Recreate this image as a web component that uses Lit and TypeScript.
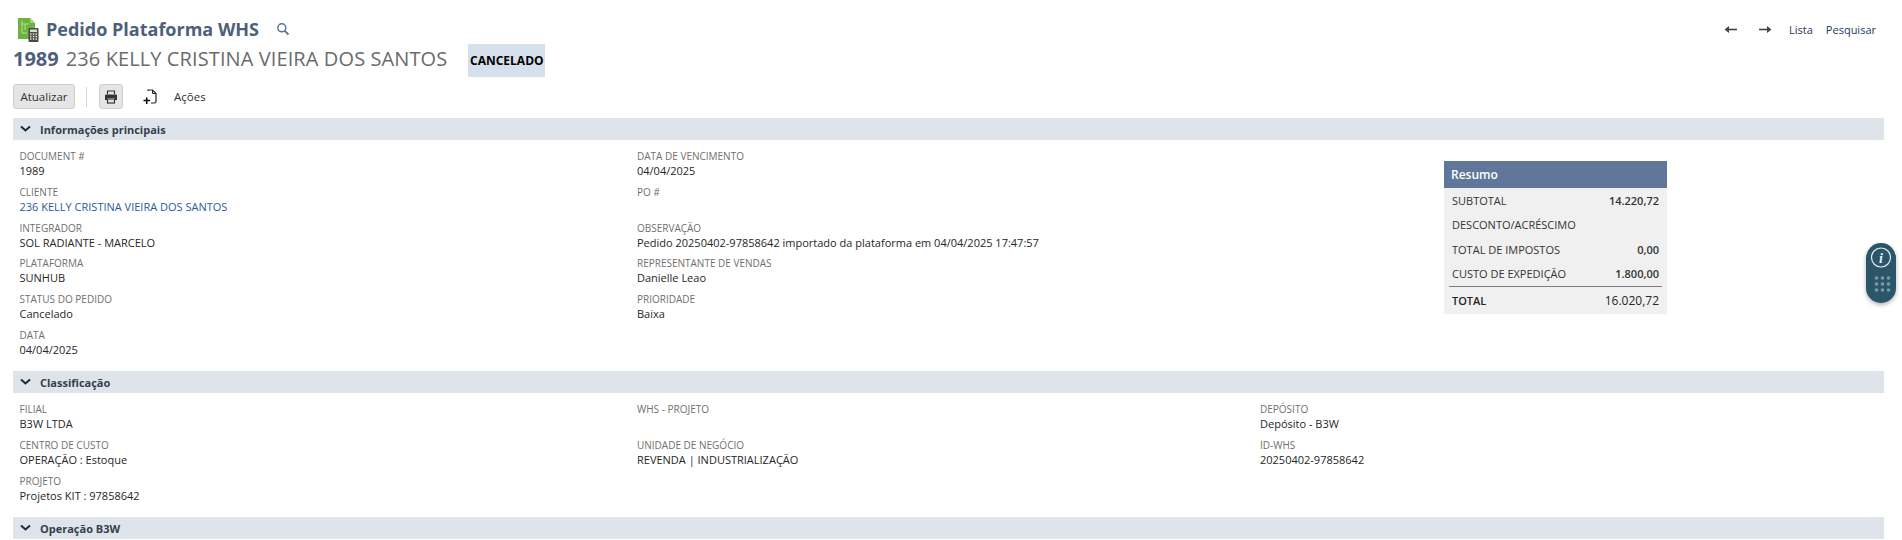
import { LitElement, html, css } from "lit";
import { customElement } from "lit/decorators.js";

type F = { l: string; v: string; link?: boolean };
const col1: F[] = [
  { l: "DOCUMENT #", v: "1989" },
  { l: "CLIENTE", v: "236 KELLY CRISTINA VIEIRA DOS SANTOS", link: true },
  { l: "INTEGRADOR", v: "SOL RADIANTE - MARCELO" },
  { l: "PLATAFORMA", v: "SUNHUB" },
  { l: "STATUS DO PEDIDO", v: "Cancelado" },
  { l: "DATA", v: "04/04/2025" },
];
const col2: F[] = [
  { l: "DATA DE VENCIMENTO", v: "04/04/2025" },
  { l: "PO #", v: "" },
  { l: "OBSERVAÇÃO", v: "Pedido 20250402-97858642 importado da plataforma em 04/04/2025 17:47:57" },
  { l: "REPRESENTANTE DE VENDAS", v: "Danielle Leao" },
  { l: "PRIORIDADE", v: "Baixa" },
];
const c1: F[] = [
  { l: "FILIAL", v: "B3W LTDA" },
  { l: "CENTRO DE CUSTO", v: "OPERAÇÃO : Estoque" },
  { l: "PROJETO", v: "Projetos KIT : 97858642" },
];
const c2: F[] = [
  { l: "WHS - PROJETO", v: "" },
  { l: "UNIDADE DE NEGÓCIO", v: "REVENDA | INDUSTRIALIZAÇÃO" },
];
const c3: F[] = [
  { l: "DEPÓSITO", v: "Depósito - B3W" },
  { l: "ID-WHS", v: "20250402-97858642" },
];
const sum = [
  ["SUBTOTAL", "14.220,72"],
  ["DESCONTO/ACRÉSCIMO", ""],
  ["TOTAL DE IMPOSTOS", "0,00"],
  ["CUSTO DE EXPEDIÇÃO", "1.800,00"],
];

const chevron = html`<svg class="chev" width="11" height="8" viewBox="0 0 11 8"><path d="M1 1.500 5.500 5.500 10 1.500" fill="none" stroke="#1f2a37" stroke-width="2"/></svg>`;

@customElement("app-root")
export class AppRoot extends LitElement {
  static styles = css`
    :host { display: block; position: relative; height: 540px; overflow: hidden; background: #fff; font-family: "Open Sans", sans-serif; color: #262626; font-size: 11px; }
    .page { padding: 0 18px 0 13px; }
    .top { display: flex; align-items: center; height: 44px; padding-top: 14px; box-sizing: border-box; padding-left: 4px; }
    .top h1 { margin: 0 0 0 5px; font-size: 18px; font-weight: 700; color: #4d5f79; line-height: 26px; }
    .search { margin-left: 17px; }
    .nav { margin-left: auto; display: flex; align-items: center; font-size: 11px; color: #1f3a5c; padding-right: 8px; }
    .nav .a2 { margin-left: 20px; }
    .nav .lista { margin-left: 17px; }
    .nav .pesq { margin-left: 13px; }
    .rec { display: flex; align-items: flex-start; height: 33px; margin-top: 0; }
    .num { font-size: 20px; font-weight: 700; color: #4d5f79; line-height: 29px; }
    .name { font-size: 20px; color: #6b6b6b; margin-left: 7px; line-height: 29px; letter-spacing: 0.1px; }
    .status { margin-left: 21px; height: 33px; width: 77px; background: #d5e0ec; color: #000; font-weight: 700; font-size: 12px; display: flex; align-items: center; justify-content: center; }
    .tools { display: flex; align-items: center; height: 25px; margin-top: 7px; }
    .btn { height: 25px; box-sizing: border-box; border: 1px solid #cfcfcf; border-radius: 3px; background: #e5e5e5; display: flex; align-items: center; justify-content: center; color: #333; font-size: 11.500px; }
    .b1 { width: 62px; }
    .sep { width: 1px; height: 20px; background: #d4d4d4; margin: 0 12px 0 11px; }
    .b2 { width: 24px; }
    .add { margin-left: 20px; }
    .acoes { margin-left: 17px; font-size: 11.500px; color: #333; }
    .bar { height: 22px; background: #dfe4eb; display: flex; align-items: center; font-weight: 700; font-size: 11px; color: #333f4d; }
    .chev { margin: 0 9px 0 7px; }
    .b-main { margin-top: 9px; }
    .s1 { display: grid; grid-template-columns: 617.500px 623px 1fr; padding: 9px 0 0 6.500px; height: 231px; box-sizing: border-box; }
    .s2 { display: grid; grid-template-columns: 617.500px 623px 1fr; padding: 9px 0 0 6.500px; height: 124px; box-sizing: border-box; }
    .f { height: 35.800px; box-sizing: border-box; }
    .l { font-size: 10px; line-height: 14px; color: #6f6f6f; }
    .v { font-size: 11px; line-height: 16px; color: #262626; }
    .v.link { color: #2a5a9c; }
    .sum { margin: 12px 0 0 184px; width: 223px; height: 153px; background: #f0f0f0; font-size: 11px; color: #333; }
    .sum h3 { margin: 0; height: 27px; background: #607799; color: #fff; font-size: 12px; font-weight: 600; display: flex; align-items: center; padding-left: 7px; }
    .sr { display: flex; justify-content: space-between; height: 24.500px; align-items: center; padding: 0 8px; }
    .sr .n { font-weight: 600; }
    .rule { height: 1px; background: #7d7d7d; margin: 0 5px; }
    .tr { display: flex; justify-content: space-between; align-items: center; padding: 0 8px; height: 27px; font-weight: 600; color: #262626; }
    .tr .n { font-size: 12px; font-weight: 500; }
    .widget { position: absolute; left: 1866px; top: 243px; width: 30px; height: 60px; border-radius: 15px; background: #2b5569; box-shadow: 0 2px 4px rgba(0,0,0,.3); }
  `;

  field(f: F) {
    return html`<div class="f"><div class="l">${f.l}</div><div class="v ${f.link ? "link" : ""}">${f.v}</div></div>`;
  }

  render() {
    return html`
      <div class="page">
        <div class="top">
          <svg width="24" height="26" viewBox="0 0 24 26">
            <path d="M1 2H13L18 7V23H1Z" fill="#6cb33f"/>
            <path d="M13 2 18 7H13Z" fill="#a4d47c"/>
            <path d="M5 5V17H10M4 8H12M8 8V14" fill="none" stroke="#b5dc96" stroke-width="1"/>
            <rect x="11.500" y="12" width="10" height="14" rx="1" fill="#4a4a44"/>
            <rect x="13" y="13.500" width="7" height="2.500" fill="#d8dcc8"/>
            <path d="M13 18h1.500M15.800 18h1.500M18.500 18H20M13 20.500h1.500M15.800 20.500h1.500M18.500 20.500H20M13 23h1.500M15.800 23h1.500M18.500 23H20" stroke="#e4e4da" stroke-width="1.400"/>
          </svg>
          <h1>Pedido Plataforma WHS</h1>
          <svg class="search" width="14" height="14" viewBox="0 0 14 14"><circle cx="5.800" cy="5.800" r="4" fill="none" stroke="#5d7390" stroke-width="1.500"/><path d="M8.800 8.800 12.500 12.500" stroke="#5d7390" stroke-width="1.800"/></svg>
          <div class="nav">
            <svg width="14" height="9" viewBox="0 0 14 9"><path d="M13 4.500H3" stroke="#444" stroke-width="1.600"/><path d="M0.500 4.500 5 1V8Z" fill="#444"/></svg>
            <svg class="a2" width="14" height="9" viewBox="0 0 14 9"><path d="M1 4.500H11" stroke="#444" stroke-width="1.600"/><path d="M13.500 4.500 9 1V8Z" fill="#444"/></svg>
            <span class="lista">Lista</span><span class="pesq">Pesquisar</span>
          </div>
        </div>
        <div class="rec">
          <span class="num">1989</span><span class="name">236 KELLY CRISTINA VIEIRA DOS SANTOS</span>
          <span class="status">CANCELADO</span>
        </div>
        <div class="tools">
          <div class="btn b1">Atualizar</div>
          <div class="sep"></div>
          <div class="btn b2">
            <svg width="14" height="14" viewBox="0 0 14 14"><path d="M3.500 4V1H10.500V4" fill="none" stroke="#333" stroke-width="1.200"/><path d="M1 5.500Q1 4.500 2 4.500H12Q13 4.500 13 5.500V10H11V8H3V10H1Z" fill="#333"/><rect x="3.500" y="9" width="7" height="4" fill="none" stroke="#333" stroke-width="1.200"/></svg>
          </div>
          <svg class="add" width="14" height="16" viewBox="0 0 14 16"><path d="M5 2V1H9.500L13 4.500V12.500Q13 14 11.500 14H8" fill="none" stroke="#222" stroke-width="1.200"/><path d="M9.500 1V4.500H13" fill="none" stroke="#222" stroke-width="1"/><path d="M0.500 11.500H7M3.700 8.500V15" stroke="#111" stroke-width="1.600"/></svg>
          <span class="acoes">Ações</span>
        </div>

        <div class="bar b-main">${chevron}Informações principais</div>
        <div class="s1">
          <div>${col1.map((f) => this.field(f))}</div>
          <div>${col2.map((f) => this.field(f))}</div>
          <div>
            <div class="sum">
              <h3>Resumo</h3>
              ${sum.map(([a, b]) => html`<div class="sr"><span>${a}</span><span class="n">${b}</span></div>`)}
              <div class="rule"></div>
              <div class="tr"><span>TOTAL</span><span class="n">16.020,72</span></div>
            </div>
          </div>
        </div>

        <div class="bar">${chevron}Classificação</div>
        <div class="s2">
          <div>${c1.map((f) => this.field(f))}</div>
          <div>${c2.map((f) => this.field(f))}</div>
          <div>${c3.map((f) => this.field(f))}</div>
        </div>

        <div class="bar">${chevron}Operação B3W</div>
      </div>
      <div class="widget">
        <svg width="30" height="60" viewBox="0 0 30 60">
          <circle cx="15" cy="14.500" r="9.500" fill="none" stroke="#e8eef1" stroke-width="1.200"/>
          <text x="15" y="19.500" text-anchor="middle" font-family="Liberation Serif, serif" font-style="italic" font-weight="700" font-size="14" fill="#e8eef1">i</text>
          <g fill="#7f9aa8">
            <circle cx="10.500" cy="35" r="1.800"/><circle cx="16.500" cy="35" r="1.800"/><circle cx="22.500" cy="35" r="1.800"/>
            <circle cx="10.500" cy="41" r="1.800"/><circle cx="16.500" cy="41" r="1.800"/><circle cx="22.500" cy="41" r="1.800"/>
            <circle cx="10.500" cy="47" r="1.800"/><circle cx="16.500" cy="47" r="1.800"/><circle cx="22.500" cy="47" r="1.800"/>
          </g>
        </svg>
      </div>
    `;
  }
}
